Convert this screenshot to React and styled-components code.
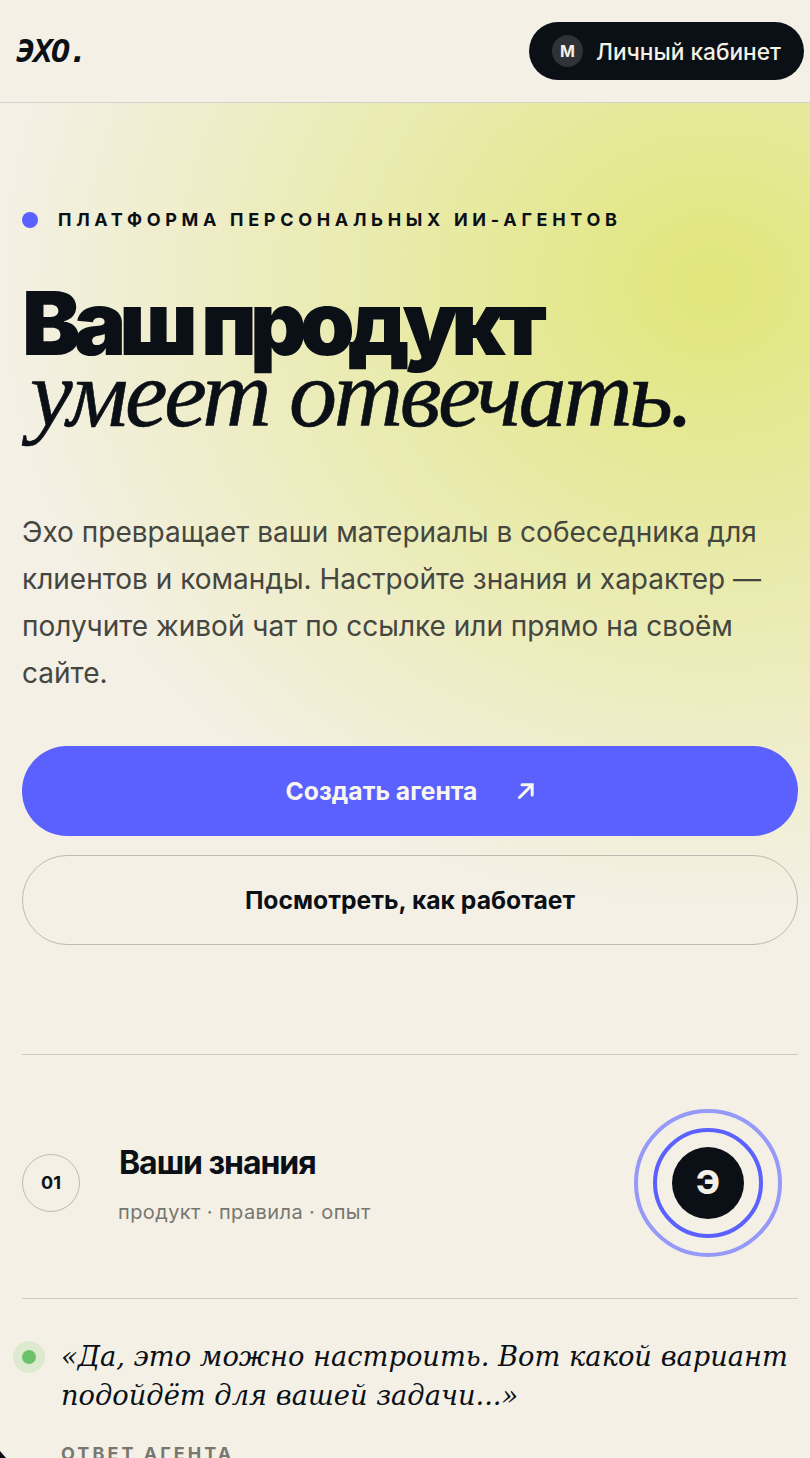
import styled, { createGlobalStyle } from "styled-components";

const GlobalStyle = createGlobalStyle`
	html, body {
		margin: 0;
		padding: 0;
		background: #f4f0e6;
	}
	* {
		box-sizing: border-box;
	}
`;

const Page = styled.div`
	position: relative;
	width: 810px;
	height: 1458px;
	overflow: hidden;
	background: #f4f0e6;
	color: #0b1017;
	font-family: Inter, "Liberation Sans", sans-serif;
`;

const Header = styled.header`
	height: 103px;
	padding: 22px 6px 0 16px;
	display: flex;
	justify-content: space-between;
	align-items: flex-start;
	border-bottom: 1px solid #d3d1cb;
`;

const Logo = styled.div`
	margin-top: 9px;
	font-family: "DejaVu Sans Mono", monospace;
	font-size: 32px;
	line-height: 40px;
	font-weight: 700;
	font-style: italic;
	letter-spacing: -1.8px;
`;

const AccountButton = styled.button`
	width: 275px;
	height: 58px;
	padding: 0 23px;
	border: none;
	border-radius: 29px;
	background: #0b1017;
	color: #f4f0e6;
	display: flex;
	align-items: center;
	gap: 13px;
	font-family: inherit;
	font-size: 22.7px;
	font-weight: 500;
	white-space: nowrap;
`;

const Avatar = styled.span`
	width: 32px;
	height: 32px;
	border-radius: 50%;
	background: #2f3237;
	display: flex;
	align-items: center;
	justify-content: center;
	font-size: 16px;
	font-weight: 700;
`;

const Hero = styled.section`
	height: 951px;
	padding: 106px 12px 0 22px;
	background: radial-gradient(
		ellipse 720px 630px at 712px 182px,
		#e0e67a 0%,
		rgba(224, 230, 122, 0) 100%
	);
`;

const Eyebrow = styled.div`
	display: flex;
	align-items: center;
	gap: 20px;
	font-size: 18px;
	line-height: 22px;
	font-weight: 700;
	letter-spacing: 0.26em;
	white-space: nowrap;
`;

const Dot = styled.span`
	width: 16px;
	height: 16px;
	border-radius: 50%;
	background: #5a61ff;
`;

const Title = styled.h1`
	margin: 53px 0 0;
	font-size: 88px;
	line-height: 78px;
	font-weight: 900;
	letter-spacing: -0.08em;
	white-space: nowrap;
`;

const TitleAccent = styled.em`
	display: block;
	margin-top: -7px;
	padding-left: 8px;
	font-family: "Liberation Serif", serif;
	font-size: 96px;
	font-weight: 400;
	font-style: italic;
	letter-spacing: -3.3px;
	-webkit-text-stroke: 0.6px #0b1017;
`;

const Lead = styled.p`
	margin: 76px 0 0;
	font-size: 28px;
	line-height: 47px;
	color: #45463f;
`;

const Actions = styled.div`
	margin-top: 49px;
	display: flex;
	flex-direction: column;
	gap: 19px;
`;

const ActionButton = styled.button`
	height: 90px;
	border-radius: 45px;
	display: flex;
	align-items: center;
	justify-content: center;
	gap: 41px;
	font-family: inherit;
	font-size: 24.7px;
	font-weight: 700;
	border: ${(p) => (p.$primary ? "none" : "1px solid #bcbbb0")};
	background: ${(p) => (p.$primary ? "#5a61ff" : "transparent")};
	color: ${(p) => (p.$primary ? "#f8f6ef" : "#0b1017")};
`;

const Content = styled.section`
	padding: 0 12px 0 22px;
`;

const Flow = styled.div`
	height: 245px;
	padding-top: 12px;
	display: flex;
	align-items: center;
	border-top: 1px solid #cfcdc2;
	border-bottom: 1px solid #cfcdc2;
`;

const StepNumber = styled.span`
	width: 58px;
	height: 58px;
	flex: none;
	border: 1px solid #bcbbb0;
	border-radius: 50%;
	display: flex;
	align-items: center;
	justify-content: center;
	font-size: 18px;
	font-weight: 700;
`;

const StepText = styled.div`
	margin-left: 39px;
	margin-top: 2px;
	flex: 1;
`;

const StepTitle = styled.div`
	font-size: 32px;
	line-height: 40px;
	font-weight: 700;
	letter-spacing: -0.033em;
`;

const StepMeta = styled.div`
	margin-top: 16px;
	margin-left: -1px;
	font-size: 20px;
	line-height: 26px;
	color: #77776f;
	letter-spacing: 0.02em;
`;

const Rings = styled.div`
	margin-right: 16px;
	width: 148px;
	height: 148px;
	flex: none;
	border: 4px solid #9599f8;
	border-radius: 50%;
	display: flex;
	align-items: center;
	justify-content: center;
`;

const MiddleRing = styled.div`
	width: 110px;
	height: 110px;
	border: 4px solid #5a61ff;
	border-radius: 50%;
	display: flex;
	align-items: center;
	justify-content: center;
`;

const Core = styled.div`
	width: 72px;
	height: 72px;
	border-radius: 50%;
	background: #0b1017;
	color: #f4f0e6;
	display: flex;
	align-items: center;
	justify-content: center;
	font-size: 32px;
	font-weight: 800;
`;

const Reply = styled.div`
	position: relative;
	padding: 38px 0 0 39px;
`;

const StatusDot = styled.span`
	position: absolute;
	left: 0;
	top: 51px;
	width: 14px;
	height: 14px;
	border-radius: 50%;
	background: #6cc268;
	box-shadow: 0 0 0 9px #deead0;
`;

const Quote = styled.div`
	font-family: "DejaVu Serif", serif;
	font-style: italic;
	font-size: 27.3px;
	line-height: 39px;
`;

const ReplyLabel = styled.div`
	margin-top: 28px;
	font-size: 18px;
	line-height: 22px;
	font-weight: 700;
	letter-spacing: 0.17em;
	color: #77776f;
`;

const CornerMark = styled.span`
	position: absolute;
	left: 0;
	bottom: 0;
	width: 6px;
	height: 7px;
	background: #0b1017;
	clip-path: polygon(0 0, 100% 100%, 0 100%);
`;

const ArrowIcon = () => (
	<svg width="16" height="16" viewBox="0 0 16 16" fill="none">
		<path
			d="M1.5 14.5L14 2M4 1.8H14.2V12"
			stroke="currentColor"
			strokeWidth="3"
			strokeLinecap="round"
		/>
	</svg>
);

const App = () => {
	return (
		<Page>
			<GlobalStyle />
			<Header>
				<Logo>ЭХО.</Logo>
				<AccountButton>
					<Avatar>М</Avatar>
					Личный кабинет
				</AccountButton>
			</Header>
			<Hero>
				<Eyebrow>
					<Dot />
					ПЛАТФОРМА ПЕРСОНАЛЬНЫХ ИИ-АГЕНТОВ
				</Eyebrow>
				<Title>
					Ваш продукт
					<TitleAccent>умеет отвечать.</TitleAccent>
				</Title>
				<Lead>
					Эхо превращает ваши материалы в собеседника для клиентов и команды.
					Настройте знания и характер — получите живой чат по ссылке или прямо
					на своём сайте.
				</Lead>
				<Actions>
					<ActionButton $primary>
						Создать агента
						<ArrowIcon />
					</ActionButton>
					<ActionButton>Посмотреть, как работает</ActionButton>
				</Actions>
			</Hero>
			<Content>
				<Flow>
					<StepNumber>01</StepNumber>
					<StepText>
						<StepTitle>Ваши знания</StepTitle>
						<StepMeta>продукт · правила · опыт</StepMeta>
					</StepText>
					<Rings>
						<MiddleRing>
							<Core>Э</Core>
						</MiddleRing>
					</Rings>
				</Flow>
				<Reply>
					<StatusDot />
					<Quote>«Да, это можно настроить. Вот какой вариант подойдёт для вашей задачи...»</Quote>
					<ReplyLabel>ОТВЕТ АГЕНТА</ReplyLabel>
				</Reply>
			</Content>
			<CornerMark />
		</Page>
	);
};

export default App;
